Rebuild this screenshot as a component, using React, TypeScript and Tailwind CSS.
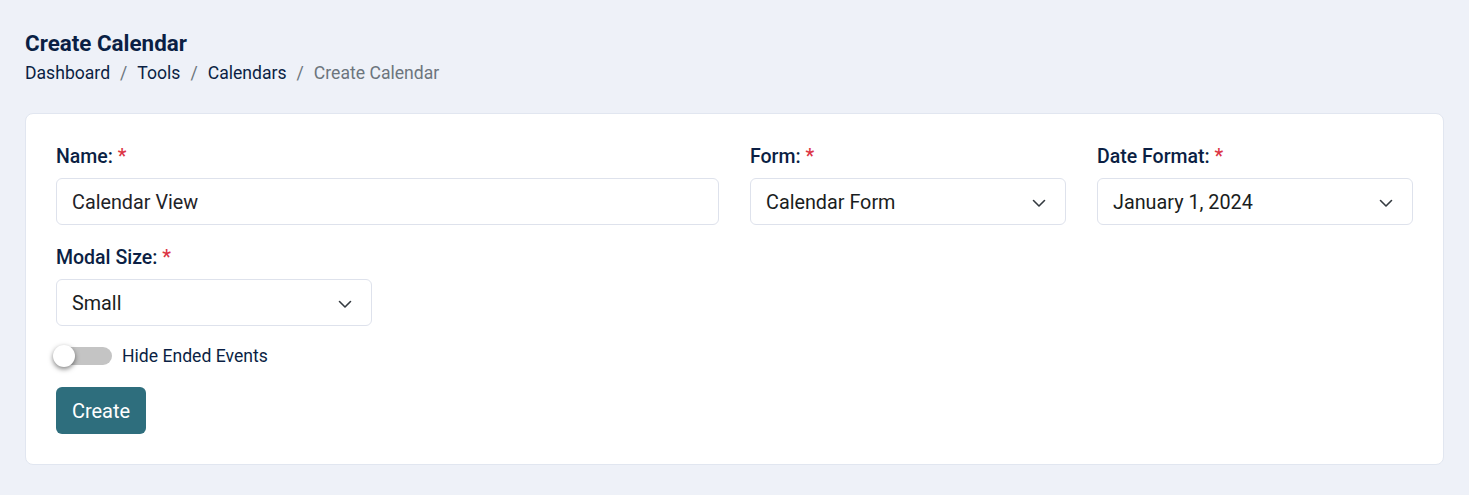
import React from "react";

const Chevron = () => (
  <svg width="16" height="16" viewBox="0 0 16 16" fill="none" className="shrink-0">
    <path d="M2.5 5.5L8 11l5.5-5.5" stroke="#343a40" strokeWidth="1.6" strokeLinecap="round" strokeLinejoin="round" />
  </svg>
);

const Label = ({ children }: { children: React.ReactNode }) => (
  <label className="block text-[19.5px] font-medium text-[#0b1f44] leading-[24px] mb-[9px]">
    {children} <span className="text-[#dc3545]">*</span>
  </label>
);

const Select = ({ value }: { value: string }) => (
  <div className="flex items-center justify-between h-[47px] rounded-[6px] border border-[#dee2ec] bg-white pl-[15px] pr-[18px] pt-[2px] text-[19.8px] text-[#1a1d21]">
    <span>{value}</span>
    <Chevron />
  </div>
);

export default function App() {
  return (
    <div className="min-h-[495px] bg-[#eef1f8] px-[25px] pt-[30px] pb-[30px]" style={{ fontFamily: "Roboto, 'Liberation Sans', sans-serif" }}>
      <h1 className="text-[22.4px] font-bold text-[#0b1f44] leading-[26px]">Create Calendar</h1>
      <nav className="mt-[5px] flex items-center text-[17.6px] leading-[24px] text-[#0b1f44]">
        <span>Dashboard</span>
        <span className="px-[10px] text-[#6c757d]">/</span>
        <span>Tools</span>
        <span className="px-[10px] text-[#6c757d]">/</span>
        <span>Calendars</span>
        <span className="px-[10px] text-[#6c757d]">/</span>
        <span className="text-[#6c757d]">Create Calendar</span>
      </nav>
      <div className="mt-[28px] rounded-[8px] border border-[#e1e6f0] bg-white px-[30px] pt-[31px] pb-[30px]">
        <div className="grid grid-cols-12 gap-x-[31px]">
          <div className="col-span-6">
            <Label>Name:</Label>
            <div className="flex items-center h-[47px] rounded-[6px] border border-[#dee2ec] bg-white px-[15px] pt-[2px] text-[19.8px] text-[#1f2328]">
              Calendar View
            </div>
          </div>
          <div className="col-span-3">
            <Label>Form:</Label>
            <Select value="Calendar Form" />
          </div>
          <div className="col-span-3">
            <Label>Date Format:</Label>
            <Select value="January 1, 2024" />
          </div>
          <div className="col-span-3 mt-[21px]">
            <Label>Modal Size:</Label>
            <Select value="Small" />
          </div>
        </div>
        <div className="mt-[19px] flex items-center gap-[10px] h-[22px]">
          <div className="relative w-[56px] h-[20px] flex items-center">
            <div className="ml-[2px] h-[18px] w-[54px] rounded-full bg-[#c4c4c4]" />
            <div className="absolute left-[-3px] top-[-1px] h-[22px] w-[22px] rounded-full bg-white shadow-[0_2px_5px_rgba(0,0,0,0.5)]" />
          </div>
          <span className="text-[17.6px] text-[#0b1f44]">Hide Ended Events</span>
        </div>
        <button className="mt-[20px] h-[47px] w-[90px] rounded-[6px] bg-[#2e6e7d] text-[20px] text-white">Create</button>
      </div>
    </div>
  );
}
